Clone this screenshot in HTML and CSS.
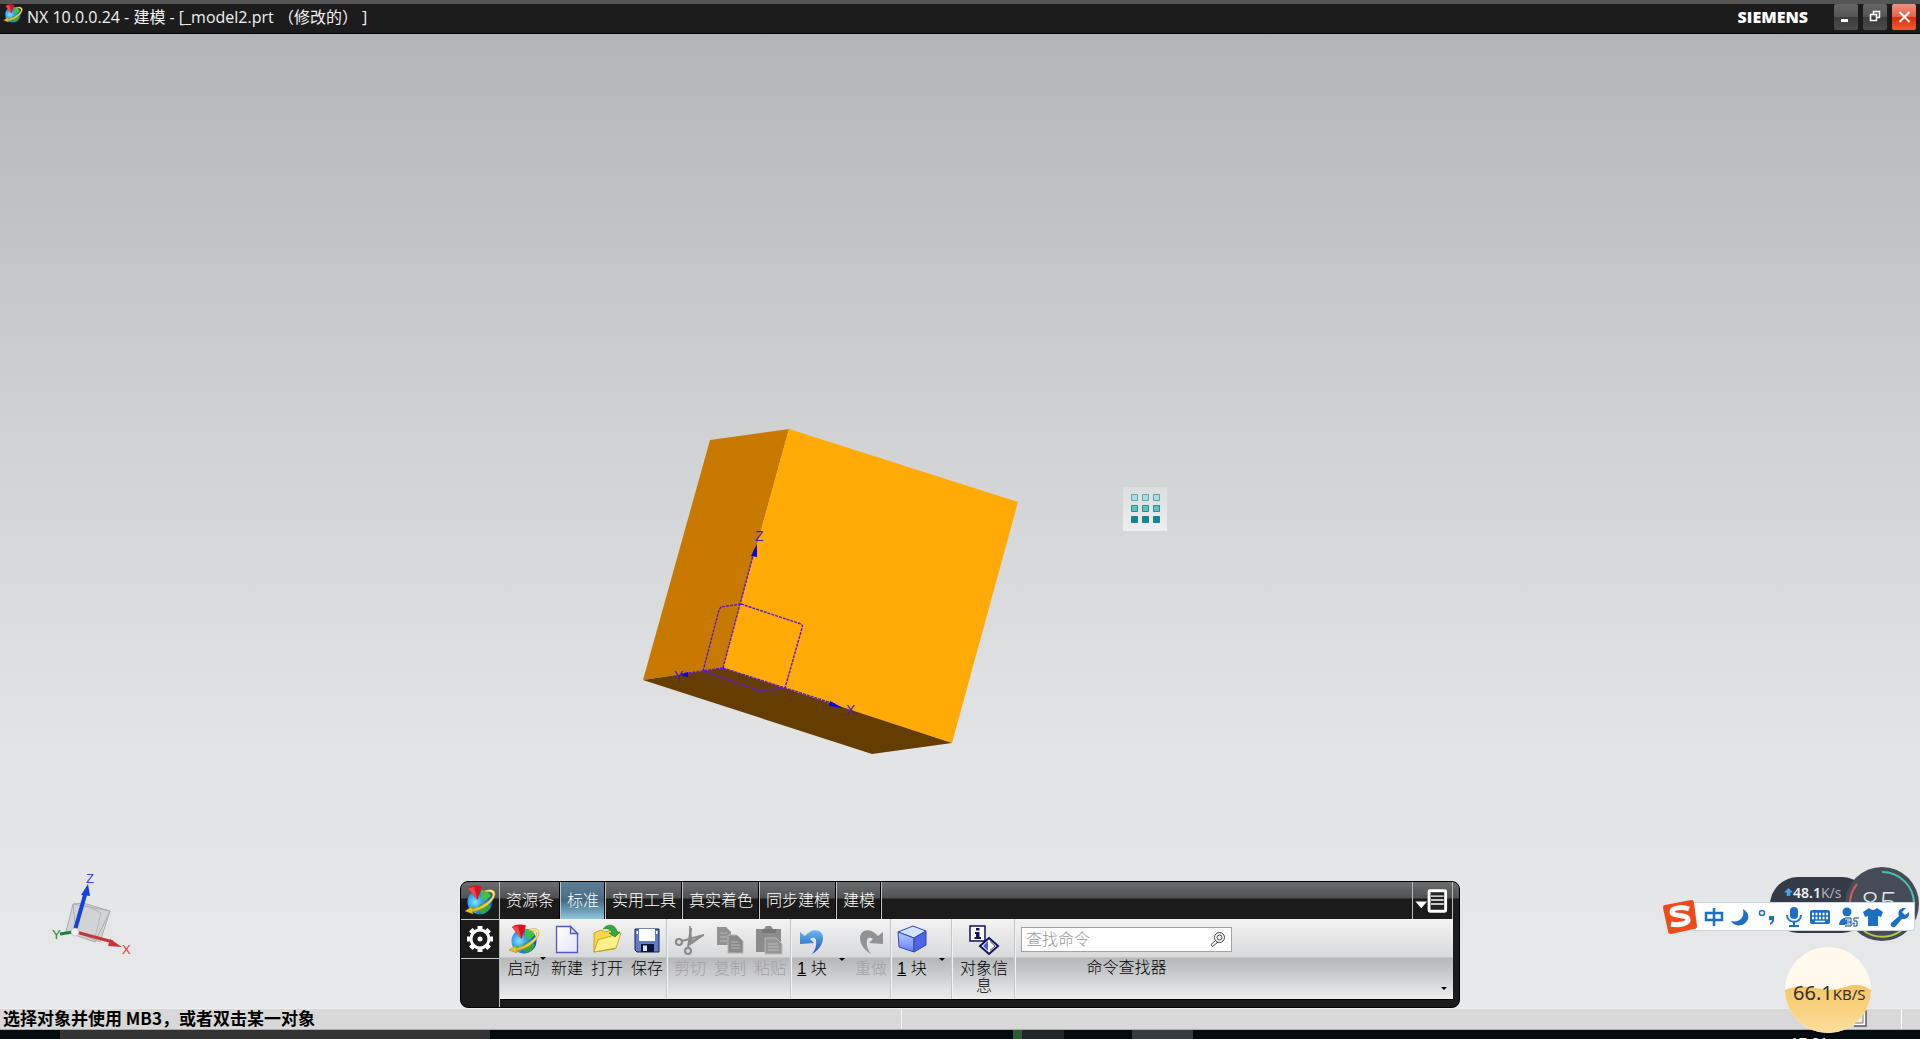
FILE: index.html
```html
<!DOCTYPE html>
<html lang="zh-CN">
<head>
<meta charset="utf-8">
<title>NX 10.0.0.24 - 建模</title>
<link rel="stylesheet" href="styles.css">
</head>
<body>
<svg class="defs" aria-hidden="true">
  <defs>
    <radialGradient id="ocean" cx=".3" cy=".5" r=".75">
      <stop offset="0" stop-color="#7fe6ff"/><stop offset=".4" stop-color="#2f9cf0"/><stop offset="1" stop-color="#0a3cb0"/>
    </radialGradient>
    <linearGradient id="gold" x1="0" y1="0" x2="0" y2="1">
      <stop offset="0" stop-color="#fff3a0"/><stop offset="1" stop-color="#e8b41c"/>
    </linearGradient>
    <linearGradient id="undoFill" x1="0" y1="0" x2="0" y2="1">
      <stop offset="0" stop-color="#6bb8f5"/><stop offset="1" stop-color="#1550b8"/>
    </linearGradient>
    <linearGradient id="pageFill" x1="0" y1="0" x2="1" y2="1">
      <stop offset="0" stop-color="#fff"/><stop offset="1" stop-color="#e3e3fb"/>
    </linearGradient>
    <linearGradient id="blockSide" x1="0" y1="0" x2="0" y2="1">
      <stop offset="0" stop-color="#b9ccff"/><stop offset="1" stop-color="#6580f5"/>
    </linearGradient>
    <linearGradient id="wave" x1="0" y1="0" x2="0" y2="1">
      <stop offset="0" stop-color="#f6c568"/><stop offset="1" stop-color="#fcdf9c"/>
    </linearGradient>
    <symbol id="nx" viewBox="0 0 32 32">
      <circle cx="16" cy="17" r="12.500" fill="url(#ocean)"/>
      <path d="M17 5c5 0 8 2 10 6l-6 5-4-2z" fill="#3fc04a"/>
      <path d="M15 20l8-3 4 4c-2 4-5 7-9 8-3-2-4-5-3-9z" fill="#35a83c"/>
      <path d="M6 22l4-1 3 6-2 1q-4-2-5-6z" fill="#3fc04a"/>
      <path d="M4 3c4-3 9-3 14-1.500L13.500 15z" fill="#d8141c"/>
      <path d="M4 3l6-1 3.500 13z" fill="#f4474a"/>
      <path d="M21 5.500c6-2 10.500-.5 10 4C30 17 19 25.500 8.500 26.500l.5 2.500L1 26l6.500-4 .5 2.300C17 22.500 28 15 28.800 10c.3-3-3-3.700-7.800-3z" fill="url(#gold)" stroke="#b5830a" stroke-width=".5"/>
    </symbol>
  </defs>
</svg>

<header class="titlebar">
  <svg class="app-icon"><use href="#nx"/></svg>
  <h1 class="title">NX 10.0.0.24 - 建模 - [_model2.prt （修改的） ]</h1>
  <span class="brand">SIEMENS</span>
  <div class="window-buttons">
    <button class="win" aria-label="最小化"><svg viewBox="0 0 24 26"><path d="M7 15h7v3H7z" fill="#fff"/></svg></button>
    <button class="win" aria-label="还原"><svg viewBox="0 0 24 26"><path d="M7.500 10.500h6v6h-6zM10.500 10V7.500h6v6H14" fill="none" stroke="#fff" stroke-width="1.500"/></svg></button>
    <button class="win close" aria-label="关闭"><svg viewBox="0 0 24 26"><path d="M7.500 8l10 10M17.500 8l-10 10" stroke="#fff" stroke-width="2"/></svg></button>
  </div>
</header>

<main class="viewport">
  <svg class="model" viewBox="630 420 400 345">
    <path d="M710 440L789 429 723 668 643 680z" fill="#c87a00"/>
    <path d="M789 429L1018 502 952 743 723 668z" fill="#ffaa05"/>
    <path d="M643 680L723 668 952 743 872 754z" fill="#663d00"/>
    <g fill="none" stroke="#5a18d8" stroke-width="1.400" stroke-dasharray="3 1">
      <path d="M723 668L755 548M741 604l60 20q2 1 1 4l-17 60M741 604l-20 3-2 3-16 61M703 671l57 20 25-3M723 668l-42 6M723 668l112 36"/>
    </g>
    <g fill="#0a00e0">
      <path d="M757 544l-6 12 6 1z"/><path d="M843 708l-13-7-1 5z"/><path d="M680 675l8-3v5z"/>
    </g>
    <g class="axis-names">
      <text x="755" y="541">Z</text><text x="846" y="715">X</text><text x="674" y="681">Y</text>
    </g>
  </svg>

  <svg class="triad" viewBox="0 0 120 110">
    <path d="M43 44l37 7-15 31-29-10zM43 44l10-1 27 8-10 31-24-10z" fill="#d2d3d5" stroke="#adadb0"/>
    <path d="M53 44l18 9-7 28" fill="none" stroke="#b8b8ba"/>
    <path d="M45 70L55 35" stroke="#1440e0" stroke-width="4"/>
    <path d="M58 24l2 12-9-1z" fill="#1440e0"/>
    <path d="M46 72l37 10" stroke="#c8343a" stroke-width="3"/>
    <path d="M92 87l-12-8-2 7z" fill="#c8343a"/>
    <path d="M43 72l-13 2" stroke="#1c8030" stroke-width="3"/>
    <circle cx="45" cy="72" r="4" fill="#f2f2f2" stroke="#aaa" stroke-width=".5"/>
    <text x="56" y="23" fill="#3048f0">Z</text><text x="92" y="94" fill="#d83a40">X</text><text x="22" y="79" fill="#208838">Y</text>
  </svg>

  <svg class="touch-pad" viewBox="0 0 44 44">
    <g fill="#a8e0e0" stroke="#58a8ac"><path d="M8.500 7.500h6v6h-6zM19.500 7.500h6v6h-6zM30.500 7.500h6v6h-6z"/></g>
    <g fill="#5fc0bc" stroke="#2f8c8e"><path d="M8.500 18.500h6v6h-6zM19.500 18.500h6v6h-6zM30.500 18.500h6v6h-6z"/></g>
    <g fill="#16878f" stroke="#16808c"><path d="M8.500 29.500h6v6h-6zM19.500 29.500h6v6h-6zM30.500 29.500h6v6h-6z"/></g>
  </svg>

  <section class="toolbar" aria-label="工具条">
    <div class="rail">
      <button class="rail-button" aria-label="NX"><svg class="rail-icon"><use href="#nx"/></svg></button>
      <button class="rail-button gear" aria-label="设置">
        <svg class="rail-icon" viewBox="0 0 32 32">
          <g stroke="#fff" stroke-width="5"><path d="M16 3v26M3 16h26M6.800 6.800l18.400 18.400M25.200 6.800L6.800 25.200"/></g>
          <circle cx="16" cy="16" r="9" fill="#1b1b1b" stroke="#fff" stroke-width="3"/>
          <circle cx="16" cy="16" r="2.500" fill="#fff"/>
        </svg>
      </button>
    </div>
    <div class="deck">
      <nav class="tabs">
        <button class="tab">资源条</button>
        <button class="tab active">标准</button>
        <button class="tab">实用工具</button>
        <button class="tab">真实着色</button>
        <button class="tab">同步建模</button>
        <button class="tab">建模</button>
        <button class="tab-menu" aria-label="菜单">
          <svg viewBox="0 0 38 38"><path d="M2 20h12l-6 7z" fill="#fff"/><rect x="16" y="9" width="17" height="21" rx="1" fill="#222" stroke="#fff" stroke-width="3"/><path d="M18 14.500h13M18 18.500h13M18 22.500h13" stroke="#fff" stroke-width="1.500"/></svg>
        </button>
      </nav>
      <div class="panel">
        <div class="group">
          <button class="tool wide"><svg class="tool-icon"><use href="#nx"/></svg>启动<span class="caret corner"></span></button>
          <button class="tool"><svg class="tool-icon" viewBox="0 0 32 32"><path d="M5.500 2.500h14l7 7v19h-21z" fill="url(#pageFill)" stroke="#5558c0" stroke-width="1.300"/><path d="M19.500 2.500v7h7z" fill="#dadcff" stroke="#5558c0" stroke-width="1.300"/></svg>新建</button>
          <button class="tool"><svg class="tool-icon" viewBox="0 0 32 32"><path d="M3 28V9l7-3 4 2 10-3 3 3v6l-3 11z" fill="#f5d94a" stroke="#b8920e" stroke-width=".8"/><path d="M3 28l4-12 23-7-5 15z" fill="#fff08a" stroke="#c09a18" stroke-width=".8"/><path d="M12 5c4-6 13-5 14 3h3l-5 5-6-4h3c-1-4-5-5-9-4z" fill="#33a83c" stroke="#1c7826" stroke-width=".6"/></svg>打开</button>
          <button class="tool"><svg class="tool-icon" viewBox="0 0 32 32"><path d="M4 5h24v23H6l-2-2z" fill="#5f7cc4" stroke="#10205c"/><path d="M8 5h16v12H8z" fill="#fff"/><path d="M5.500 7h1.500v3H5.500zM25 7h1.500v3H25z" fill="#fff"/><path d="M10 20h13v8H10z" fill="#0c1240"/><path d="M12 21.500h4V27h-4z" fill="#dfe5f8"/></svg>保存</button>
        </div>
        <div class="group pad">
          <button class="tool" disabled><svg class="tool-icon" viewBox="0 0 32 32" fill="none" stroke="#8a8a8a" stroke-width="2.200"><circle cx="5" cy="18" r="3"/><circle cx="14" cy="27" r="3"/><path d="M8 17l22-6M14 24l3-20" /><path d="M30 11L15 18l1 3zM16 2l-1 18 3-1z" fill="#8a8a8a" stroke-width="1"/></svg>剪切</button>
          <button class="tool" disabled><svg class="tool-icon" viewBox="0 0 32 32"><path d="M3 3h9l5 5v13H3z" fill="#929292"/><path d="M14 11h9l6 6v12H14z" fill="#8a8a8a" stroke="#b5b5b5"/><path d="M6 9h7M6 13h7M6 17h7M17 18h8M17 21h9M17 24h9" stroke="#b4b4b4"/></svg>复制</button>
          <button class="tool" disabled><svg class="tool-icon" viewBox="0 0 32 32"><path d="M2 5h8l2-3h5l2 3h8v23H2z" fill="#8c8c8c"/><path d="M8 5h14v4H8z" fill="#777"/><path d="M11 14h11l6 6v10H11z" fill="#969696" stroke="#b9b9b9"/><path d="M14 20h10M14 23h11M14 26h11" stroke="#bbb"/></svg>粘贴</button>
        </div>
        <div class="group">
          <button class="tool"><svg class="tool-icon" viewBox="0 0 32 32"><path d="M4 8v12l14-1-4-4c4-3 7-1 6 6-.4 4-2 6-4 9 6-3 11-10 11-16C27 5 16 3 9 12z" fill="url(#undoFill)"/></svg><span><u>1</u> 块</span></button>
          <button class="drop" aria-label="撤销列表"><span class="caret"></span></button>
          <button class="tool" disabled><svg class="tool-icon" viewBox="0 0 32 32"><path d="M28 8v12l-14-1 4-4c-4-3-7-1-6 6 .4 4 2 6 4 9-6-3-11-10-11-16C5 5 16 3 23 12z" fill="#8f9398"/></svg>重做</button>
        </div>
        <div class="group">
          <button class="tool"><svg class="tool-icon" viewBox="0 0 32 32"><g stroke="#3345b0" stroke-linejoin="round"><path d="M2 8l15-6 13 5-12 7z" fill="#cfe4ff"/><path d="M2 8l16 6v14L3 23z" fill="url(#blockSide)"/><path d="M18 14l12-7v14l-12 7z" fill="#5064e8"/></g></svg><span><u>1</u> 块</span></button>
          <button class="drop" aria-label="重复命令列表"><span class="caret"></span></button>
        </div>
        <div class="group">
          <button class="tool info"><svg class="tool-icon" viewBox="0 0 32 32"><path d="M2 2h15v15H2z" fill="#fff" stroke="#101060" stroke-width="1.500"/><path d="M8 4h3.500v2.500H8zM7 8h4.500v5H13v2H6.500v-2H8v-3H7z" fill="#101060"/><path d="M21 14l9 8-9 8-9-8z" fill="#fff" stroke="#101060" stroke-width="2"/><path d="M20 17v10l-5-5z" fill="#4860e0"/><path d="M22 17.500l5 4.500-5 4.500" fill="none" stroke="#555"/></svg>对象信息</button>
        </div>
        <div class="finder">
          <div class="search">
            <input id="finder" type="text" placeholder="查找命令">
            <svg viewBox="0 0 18 18" fill="none" stroke="#444"><circle cx="10.500" cy="6.500" r="5"/><circle cx="10.500" cy="6.500" r="2.500"/><path d="M7 9l-5 4.500 1.500 2L9 11"/></svg>
          </div>
          <label for="finder">命令查找器</label>
        </div>
        <button class="more" aria-label="工具条选项"><span class="caret"></span></button>
      </div>
    </div>
  </section>
</main>

<footer class="status">
  <span class="cue">选择对象并使用 MB3，或者双击某一对象</span>
  <svg class="status-icon" viewBox="0 0 20 20"><path d="M3 2h14v15H5" fill="#fff" stroke="#555" stroke-width="1.500"/><path d="M6 5h8v9H6z" fill="#eee" stroke="#777"/></svg>
</footer>
<div class="taskbar">
  <span class="task-window"></span><span class="task-green"></span><span class="task-dim"></span><span class="task-light"></span>
  <span class="clock">17:21</span>
</div>

<aside class="speed" aria-label="加速球">
  <div class="pill"><svg viewBox="0 0 10 10"><path d="M5 0l5 5H7v4H3V5H0z" fill="#4aa3ea"/></svg><b>48.1</b>K/s</div>
  <div class="dial">
    <svg viewBox="0 0 76 76"><circle cx="38" cy="38" r="37" fill="#454b57"/><g fill="none" stroke-width="2"><path d="M38 6a32 32 0 0 1 32 32" stroke="#45c4b4"/><path d="M6 36a32 32 0 0 1 7-18" stroke="#d85a60"/><path d="M20 65a32 32 0 0 0 38-1" stroke="#b5cc40"/></g></svg>
    <span class="score">85</span>
  </div>
</aside>

<aside class="ime" aria-label="输入法">
  <svg class="sogou" viewBox="0 0 36 36"><path d="M3 6l26-5q3 0 3 3l3 23q0 3-3 3L9 35q-3 0-3-3L1 9q0-3 2-3z" fill="#ee4b1c"/><path d="M27 10c-8-3-17-1-17 3 0 5 15 2 16 7 1 4-8 7-17 5" fill="none" stroke="#fff" stroke-width="5"/></svg>
  <button class="ime-key" aria-label="中文"><svg viewBox="0 0 22 22"><path d="M3 7h16v7H3zM11 2v18" fill="none" stroke="#1b70c4" stroke-width="2.500"/></svg></button>
  <button class="ime-key" aria-label="半角"><svg viewBox="0 0 22 22"><path d="M14 3c7 4 7 11 1 15-5 3-11 1-13-3 8 2 14-3 12-12z" fill="#1b70c4"/></svg></button>
  <button class="ime-key" aria-label="标点"><svg viewBox="0 0 22 22"><circle cx="6" cy="7" r="2.500" fill="none" stroke="#1b70c4" stroke-width="1.500"/><path d="M13 10h5v4q0 3-4 5v-2q2-1 2-3h-3z" fill="#1b70c4"/></svg></button>
  <button class="ime-key" aria-label="语音"><svg viewBox="0 0 22 22"><rect x="7" y="1" width="8" height="12" rx="4" fill="#1b70c4"/><path d="M4 9c0 9 14 9 14 0M11 15v4M6 20h10" fill="none" stroke="#1b70c4" stroke-width="2"/></svg></button>
  <button class="ime-key" aria-label="软键盘"><svg viewBox="0 0 22 22"><rect x="1" y="4" width="20" height="14" rx="2" fill="#1b70c4"/><path d="M3 8h16M3 12h16" stroke="#fff" stroke-width="2.500" stroke-dasharray="2 1.500"/><path d="M6 15.500h10" stroke="#fff" stroke-width="1.500"/></svg></button>
  <button class="ime-key" aria-label="账号"><svg viewBox="0 0 22 22"><circle cx="11" cy="6" r="4.500" fill="#1b70c4"/><path d="M3 19c0-10 16-10 16 0z" fill="#1b70c4"/><path d="M9 12h6v8H9M11 16h4M23 12h-5v3h3v5h-4" fill="none" stroke="#fff" stroke-width="3"/><path d="M9 12h6v8H9M11 16h4M23 12h-5v3h3v5h-4" fill="none" stroke="#0b3d85"/></svg></button>
  <button class="ime-key" aria-label="皮肤"><svg viewBox="0 0 22 22"><path d="M7 2q4 4 8 0l6 4-2 5-3-1v10H6V10l-3 1-2-5z" fill="#1b70c4"/></svg></button>
  <button class="ime-key" aria-label="工具箱"><svg viewBox="0 0 22 22"><path d="M17 2c-5-1-9 3-7 8l-8 7c-1 3 1 5 4 4l7-8c5 1 8-3 7-7l-4 3-3-3z" fill="#1b70c4"/></svg></button>
</aside>

<aside class="ball" aria-label="网速">
  <svg viewBox="0 0 86 86"><circle cx="43" cy="43" r="43" fill="#fffaec"/><path d="M0 43q14-6 30-2t30-1 26 3a43 43 0 0 1-86 0z" fill="url(#wave)"/></svg>
  <span class="rate"><span class="rate-number">66.1</span>KB/S</span>
</aside>
</body>
</html>
```
FILE: styles.css
```css
* { box-sizing: border-box; }

body {
  position: relative;
  display: flex;
  flex-direction: column;
  min-height: 100vh;
  margin: 0;
  overflow: hidden;
  background: #e6e7e9;
  font: 16px/18px "Liberation Sans", "Noto Sans CJK SC", sans-serif;
  color: #000;
}

button {
  margin: 0;
  padding: 0;
  border: 0;
  background: none;
  font: inherit;
  color: inherit;
}

svg { display: block; }
.defs { position: absolute; width: 0; height: 0; }

/* title bar */
.titlebar {
  display: flex;
  align-items: flex-start;
  height: 34px;
  padding: 0 4px 0 2px;
  border-top: 4px solid #555;
  border-bottom: 1px solid #000;
  background: #1c1c1c;
  color: #f2f2f2;
}
.app-icon { width: 22px; height: 20px; }
.title {
  margin: 0 auto 0 3px;
  font: 16px/26px "Open Sans", "Noto Sans CJK SC", sans-serif;
}
.brand {
  margin-right: 26px;
  font: 800 16px/26px "Open Sans", sans-serif;
  color: #fff;
}
.window-buttons { display: flex; gap: 5px; }
.win {
  width: 24px;
  height: 26px;
  border-radius: 2px;
  background: linear-gradient(#666, #555 50%, #3c3c3c 52%, #4c4c4c);
}
.close { background: linear-gradient(#f09080, #e86048 50%, #dc2c0c 52%, #f06030); }

/* modelling canvas */
.viewport {
  position: relative;
  display: flex;
  flex: 1;
  align-items: flex-end;
  justify-content: center;
  background: linear-gradient(#b4b5b7, #d0d1d3 40%, #e3e4e6 74%, #e7e8ea);
}
.model { position: absolute; left: 630px; top: 386px; width: 400px; height: 345px; }
.axis-names { font: 14px "Liberation Sans", sans-serif; fill: #4a18b8; }
.triad { position: absolute; left: 30px; bottom: 38px; width: 120px; height: 110px; font: 13px "Liberation Sans", sans-serif; }
.touch-pad {
  position: absolute;
  left: 1123px;
  top: 453px;
  width: 44px;
  height: 44px;
  background: linear-gradient(#dcdddf, #eee);
}

/* floating toolbar */
.toolbar {
  position: relative;
  display: flex;
  width: 1000px;
  max-width: 100%;
  padding-right: 6px;
  border-radius: 8px;
  background: linear-gradient(#6a6b6d 1px, #505152 16px, #1b1b1b 17px);
  border: 1px solid #000;
}
.rail { width: 38px; }
.rail-button {
  display: grid;
  place-items: center;
  width: 100%;
  height: 38px;
  border-bottom: 1px solid #c8c8c8;
}
.gear { height: 39px; }
.rail-icon { width: 32px; height: 32px; }
.deck { flex: 1; padding-bottom: 7px; border-left: 1px solid #bbb; }
.tabs { display: flex; height: 37px; color: #fff; }
.tab {
  padding: 0 6px;
  border-right: 1px solid #c4c4c4;
  box-shadow: inset -1px 0 #000;
  font-weight: 300;
}
.active { background: linear-gradient(#5f7f98, #496c84 46%, #3f6880 48%, #8fc6dc); }
.tab-menu {
  width: 41px;
  margin-left: auto;
  border-left: 1px solid #bbb;
  border-right: 1px solid #bbb;
}
.tab-menu svg { width: 38px; height: 37px; }

.panel {
  display: flex;
  height: 81px;
  border-bottom: 1px solid #000;
  background: linear-gradient(#f3f3f3, #d8d9db 47%, #b6b7b9 49%, #cbccce 70%, #eceded);
  font-weight: 300;
}
.group { display: flex; border-right: 1px solid #f2f2f2; box-shadow: inset -1px 0 #c4c5c7; }
.pad { padding: 0 1px 0 2px; }
.tool {
  position: relative;
  display: flex;
  flex-direction: column;
  align-items: center;
  gap: 4px;
  width: 40px;
  padding-top: 5px;
}
.drop + .tool { margin-left: -1px; }
.wide { width: 47px; }
.info { width: 62px; padding-left: 7px; padding-right: 7px; line-height: 17px; }
.tool:disabled { color: #a2a2a4; }
.tool-icon { flex: none; width: 32px; height: 32px; }
.drop { width: 20px; }
.caret {
  display: block;
  width: 0;
  margin: 0 auto;
  border: 3px solid transparent;
  border-top-color: #000;
  border-bottom: 0;
}
.corner { position: absolute; right: 1px; top: 38px; }
.finder {
  display: flex;
  flex-direction: column;
  align-items: center;
  gap: 7px;
  padding: 8px 0 0 5px;
}
.search {
  display: flex;
  align-items: center;
  width: 211px;
  height: 25px;
  padding: 0 4px;
  border: 1px solid #a4a4a6;
  background: #fff;
}
.search input {
  flex: 1;
  min-width: 0;
  padding: 0;
  border: 0;
  outline: 0;
  background: none;
  font: inherit;
}
.search input::placeholder { color: #999; }
.search svg { width: 18px; height: 18px; }
.more { align-self: flex-end; width: 18px; height: 22px; margin-left: auto; }

/* status line */
.status {
  display: flex;
  align-items: center;
  height: 22px;
  border-top: 1px solid #eee;
  border-bottom: 1px solid #a8aaac;
  background: #d8d8d8;
}
.cue {
  flex: 0 0 47%;
  align-self: stretch;
  padding-left: 3px;
  border-right: 1px solid #f6f6f6;
  font: bold 17px/18px "Noto Sans CJK SC", sans-serif;
}
.status-icon { width: 20px; height: 20px; margin-left: auto; margin-right: 32px; }
.status::after { content: ""; width: 18px; height: 20px; border-left: 1px solid #fff; }

/* desktop task bar, cut off by the screen edge */
.taskbar { display: flex; height: 9px; overflow: hidden; padding-left: 60px; background: #020b0e; }
.task-window { width: 430px; background: #333; }
.task-green { width: 9px; margin-left: 523px; background: #2f5c34; }
.task-dim { width: 42px; background: #1e2628; }
.task-light { width: 61px; margin-left: 68px; background: #333d40; }
.clock { margin-left: auto; padding: 4px 92px 0 0; color: #fff; font-size: 15px; }

/* desktop widgets floating over the window */
.speed { position: absolute; right: 0; bottom: 97px; width: 150px; height: 76px; }
.pill {
  position: absolute;
  top: 11px;
  left: 0;
  display: flex;
  align-items: center;
  width: 100px;
  height: 56px;
  padding: 0 0 26px 14px;
  border-radius: 28px;
  background: #343a46;
  color: #aab0bc;
  font: 14px "Noto Sans", sans-serif;
}
.pill b { color: #eef1f6; font-weight: 600; }
.pill svg { width: 9px; height: 9px; }
.dial { position: absolute; right: 0; top: 0; width: 76px; height: 76px; }
.score {
  position: absolute;
  left: 17px;
  top: 18px;
  font: 300 32px/36px "Open Sans", sans-serif;
  color: #e4e8ee;
}
.ime {
  position: absolute;
  right: 5px;
  bottom: 108px;
  display: flex;
  align-items: center;
  justify-content: space-between;
  width: 230px;
  height: 29px;
  padding: 0 3px 0 0;
  border: 1px solid #c4d8e8;
  background: #fff;
}
.sogou { width: 36px; height: 36px; margin-left: -24px; }
.ime-key svg { width: 22px; height: 22px; overflow: visible; }
.ball { position: absolute; right: 49px; bottom: 6px; width: 86px; height: 86px; }
.rate {
  position: absolute;
  left: 8px;
  top: 34px;
  display: flex;
  align-items: baseline;
  font: 15px/24px "Noto Sans", sans-serif;
  color: #33302a;
}
.rate-number { font-size: 20px; }
```
